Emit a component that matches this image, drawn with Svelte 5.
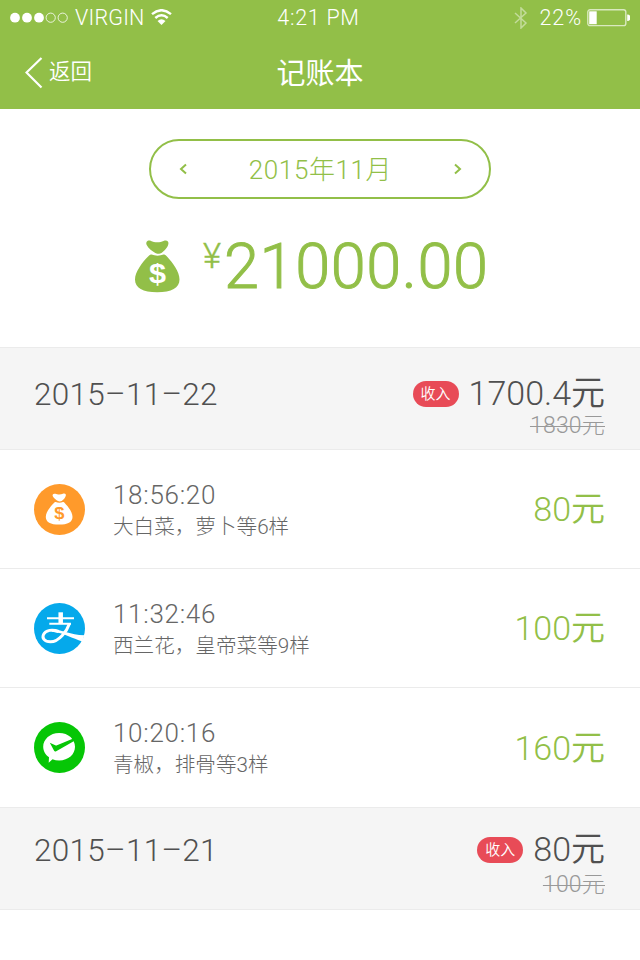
<script lang="ts">
  interface Entry {
    kind: "cash" | "alipay" | "wechat";
    time: string;
    items: string;
    amount: number;
  }

  interface Day {
    date: string;
    income: string;
    original: string;
    entries: Entry[];
  }

  let month = "2015年11月";
  let total = "21000.00";

  let days: Day[] = [
    {
      date: "2015–11–22",
      income: "1700.4",
      original: "1830",
      entries: [
        { kind: "cash", time: "18:56:20", items: "大白菜，萝卜等6样", amount: 80 },
        { kind: "alipay", time: "11:32:46", items: "西兰花，皇帝菜等9样", amount: 100 },
        { kind: "wechat", time: "10:20:16", items: "青椒，排骨等3样", amount: 160 },
      ],
    },
    { date: "2015–11–21", income: "80", original: "100", entries: [] },
  ];
</script>

{#snippet moneyBag()}
  <path d="M11.700 5C10.300 2 12.700-.2 16 .9c3 1.500 9 1.800 12.500 0 3.200-1.400 5.400.3 4.900 2.900-.4 3.500-4.400 7.500-7 9.200-1.300.9-4.800.9-6.100 0-2.700-1.700-7-4.300-8.600-8z" />
  <path d="M16.500 14.600c3.500 1.500 8.500 1.500 12 0 1.200-.5 2.100.4 3 1.400C38 22.700 44.500 32 44.500 39.500c0 8.500-8 12.700-22.300 12.700S0 48 0 39.500C0 32 7 22.500 13.600 16c1-1 1.700-1.900 2.900-1.400z" />
{/snippet}

<div class="app">
  <header>
    <div class="status">
      <div class="carrier">
        <svg class="signal" width="60" height="12" viewBox="0 0 60 12">
          <circle cx="5" cy="5.700" r="4.900" fill="#fff" />
          <circle cx="17" cy="5.700" r="4.900" fill="#fff" />
          <circle cx="29" cy="5.700" r="4.900" fill="#fff" />
          <circle cx="40.700" cy="5.700" r="4.600" fill="none" stroke="#fff" stroke-width=".8" />
          <circle cx="52.700" cy="5.700" r="4.600" fill="none" stroke="#fff" stroke-width=".8" />
        </svg>
        <span class="network">VIRGIN</span>
        <svg class="wifi" width="21" height="16" viewBox="0 0 21 16">
          <g fill="none" stroke="#fff" stroke-width="2.400">
            <path d="M1 5.200Q10.500-2.800 20 5.200" />
            <path d="M4.300 9Q10.500 3.300 16.700 9" />
          </g>
          <path d="M6.500 12Q10.500 8.500 14.500 12L10.500 16z" fill="#fff" />
        </svg>
      </div>
      <div class="clock">4:21 PM</div>
      <div class="power">
        <svg class="bluetooth" width="14" height="22" viewBox="0 0 14 22">
          <path d="M1 6l11 10-5 5V1l5 5L1 16" fill="none" stroke="#fff" stroke-width="1.500" />
        </svg>
        <span class="percent">22%</span>
        <svg class="battery" width="43" height="18" viewBox="0 0 43 18">
          <rect x=".8" y=".8" width="38" height="15.800" rx="2.200" fill="none" stroke="#fff" stroke-opacity=".65" stroke-width="1.400" />
          <rect x="2.200" y="2.300" width="7.500" height="12.900" fill="#fff" />
          <path d="M40.200 5.500a3.200 3.200 0 0 1 0 6.500z" fill="#fff" />
        </svg>
      </div>
    </div>
    <nav>
      <button class="back">
        <svg width="18" height="32" viewBox="0 0 18 32">
          <path d="M16.500 1L1.500 15.500 16.500 30.500" fill="none" stroke="#fff" stroke-width="2.200" />
        </svg>
        <span>返回</span>
      </button>
      <h1>记账本</h1>
    </nav>
  </header>

  <section class="summary">
    <div class="month">
      <svg width="8" height="12" viewBox="0 0 8 12">
        <path d="M7 1.500L2 6l5 4.500" />
      </svg>
      <span>{month}</span>
      <svg width="8" height="12" viewBox="0 0 8 12">
        <path d="M1 1.500L6 6l-5 4.500" />
      </svg>
    </div>
    <div class="total">
      <svg class="bag" width="45" height="53" viewBox="0 0 45 53" fill="#92bf48">
        {@render moneyBag()}
        <text x="14" y="42.500" textLength="17" lengthAdjust="spacingAndGlyphs" fill="#fff">$</text>
      </svg>
      <span class="yen">¥</span>
      <span class="sum">{total}</span>
    </div>
  </section>

  {#each days as day, i}
    <div class="day" class:first={i === 0}>
      <div class="date">{day.date}</div>
      <div class="figures">
        <div class="income">
          <span class="badge">收入</span>
          <span class="value">{day.income}元</span>
        </div>
        <div class="original">{day.original}元</div>
      </div>
    </div>
    {#each day.entries as entry}
      <div class="entry">
        <svg class="icon" width="51" height="51" viewBox="0 0 51 51">
          {#if entry.kind === "cash"}
            <circle cx="25.500" cy="25.500" r="25.500" fill="#ff9a2b" />
            <g transform="translate(11.800 9.300) scale(.6)" fill="#fff">
              {@render moneyBag()}
              <text x="14" y="42.500" textLength="17" lengthAdjust="spacingAndGlyphs" fill="#ff9a2b">$</text>
            </g>
          {:else if entry.kind === "alipay"}
            <circle cx="25.500" cy="25.500" r="25.500" fill="#05a9eb" />
            <g fill="none" stroke="#fff">
              <path d="M13 15.300H40M15.300 20.700H37" stroke-width="2" />
              <path d="M26.700 9.300V20.700" stroke-width="4.500" />
              <path d="M35.500 20.500C33 28 25 38.800 16.500 38.800c-6.500 0-8.500-4-7-7.300 2-4.500 9-5.500 15-3" stroke-width="3" />
            </g>
            <path d="M18 26C28 26.500 36 32 50.300 32.200L48.300 38.500C38.500 35.500 30 30 18 28.800z" fill="#fff" />
          {:else}
            <circle cx="25.500" cy="25.500" r="25.500" fill="#06c606" />
            <path d="M25.200 11C34.500 11 41 17.300 41 24.800S34.500 38.500 25.200 38.500c-2.500 0-4.700-.4-6.700-1.200L14.700 40.700l.3-5.400C11.500 33 9.200 29 9.200 24.800 9.200 17.300 16 11 25.200 11z" fill="#fff" />
            <path d="M15.800 20.800l5.500 2.400c.6.300 1.100.3 1.700 0L39.300 16.500 41 18.500 22.200 29.200c-.8.500-1.700.3-2.100-.5z" fill="#06c606" />
          {/if}
        </svg>
        <div class="detail">
          <div class="time">{entry.time}</div>
          <div class="items">{entry.items}</div>
        </div>
        <div class="amount">{entry.amount}元</div>
      </div>
    {/each}
  {/each}
</div>

<style>
  :global(body) {
    margin: 0;
    background: #fff;
  }

  .app {
    width: 640px;
    min-height: 960px;
    background: #fff;
    color: #505050;
    font-family: Roboto, "Noto Sans CJK SC", sans-serif;
    font-weight: 350;
    white-space: nowrap;
  }

  header {
    height: 109px;
    background: #92bf48;
    color: #fff;
  }

  .status {
    height: 35px;
    box-sizing: border-box;
    padding: 0 10px;
    display: grid;
    grid-template-columns: 1fr auto 1fr;
    align-items: center;
    font-size: 21.500px;
    line-height: 35px;
    font-weight: 300;
  }

  .carrier,
  .power {
    display: flex;
    align-items: center;
  }

  .network {
    margin: 0 6px 0 5px;
    letter-spacing: 0.2px;
  }

  .wifi {
    margin-top: -2px;
  }

  .clock {
    margin-right: 3px;
    letter-spacing: 0.700px;
  }

  .power {
    justify-content: flex-end;
  }

  .bluetooth {
    opacity: 0.45;
    margin-right: 12px;
  }

  .percent {
    margin-right: 5px;
    letter-spacing: 0.900px;
  }

  nav {
    height: 74px;
    display: grid;
    grid-template-columns: 1fr auto 1fr;
    align-items: center;
  }

  .back {
    display: flex;
    align-items: center;
    gap: 6px;
    height: 74px;
    padding: 0 0 0 25px;
    border: none;
    background: none;
    color: #fff;
    font: inherit;
    font-size: 21.500px;
  }

  .back span {
    padding-bottom: 7px;
  }

  h1 {
    margin: 0;
    padding-top: 2px;
    font-size: 29px;
    font-weight: 400;
    line-height: 74px;
  }

  .summary {
    height: 238px;
    box-sizing: border-box;
    padding-top: 30px;
    color: #92bf48;
  }

  .month {
    width: 342px;
    height: 60px;
    box-sizing: border-box;
    margin: 0 auto;
    padding: 0 27px 0 28px;
    border: 2px solid #92bf48;
    border-radius: 30px;
    display: flex;
    align-items: center;
    justify-content: space-between;
    font-size: 26px;
    font-weight: 300;
    line-height: 56px;
    letter-spacing: 0.600px;
  }

  .month span {
    padding-top: 1px;
  }

  .month svg {
    fill: none;
    stroke: #92bf48;
    stroke-width: 2;
  }

  .total {
    display: flex;
    align-items: flex-start;
    padding: 31px 0 0 135px;
  }

  .bag {
    margin-top: 10px;
    overflow: visible;
  }

  svg text {
    font-family: "Liberation Sans", sans-serif;
    font-size: 27px;
    font-weight: bold;
  }

  .yen {
    margin: 0 3px 0 23px;
    font-size: 35px;
    line-height: 54px;
    -webkit-text-stroke: 0.400px #92bf48;
  }

  .sum {
    font-size: 63px;
    font-weight: 300;
    line-height: 74px;
    letter-spacing: 0.600px;
    -webkit-text-stroke: 1px #92bf48;
  }

  .day {
    height: 103px;
    box-sizing: border-box;
    padding: 25px 35px 0 34px;
    border-top: 1px solid #ebebeb;
    border-bottom: 1px solid #ebebeb;
    background: #f5f5f5;
    display: flex;
    justify-content: space-between;
  }

  .day.first {
    padding-top: 29px;
  }

  .date {
    font-size: 31.500px;
    line-height: 36px;
    letter-spacing: 0.300px;
  }

  .figures {
    text-align: right;
  }

  .income {
    display: flex;
    align-items: center;
    justify-content: flex-end;
    height: 34px;
  }

  .badge {
    width: 46px;
    height: 26px;
    margin-right: 10px;
    border-radius: 13px;
    background: #e84b57;
    color: #fff;
    font-size: 15px;
    line-height: 27px;
    text-align: center;
  }

  .value {
    margin-top: -3px;
    font-size: 34px;
    line-height: 34px;
  }

  .original {
    margin-top: 2px;
    color: #999;
    font-size: 23px;
    font-weight: 300;
    line-height: 32px;
    letter-spacing: 0.200px;
    text-decoration: line-through 1px;
  }

  .first .original {
    margin-top: -1px;
  }

  .entry {
    height: 119px;
    box-sizing: border-box;
    padding: 0 35px 0 34px;
    border-bottom: 1px solid #ebebeb;
    display: flex;
    align-items: center;
  }

  .entry:has(+ .day) {
    border-bottom: none;
  }

  .icon {
    flex: none;
  }

  .detail {
    flex: 1;
    margin-left: 28px;
    padding-top: 3px;
    color: #666;
  }

  .time {
    font-size: 26px;
    line-height: 32px;
    letter-spacing: 0.700px;
  }

  .items {
    font-size: 20.600px;
    font-weight: 300;
    line-height: 32px;
  }

  .amount {
    color: #92bf48;
    font-size: 34px;
    line-height: 50px;
  }
</style>
